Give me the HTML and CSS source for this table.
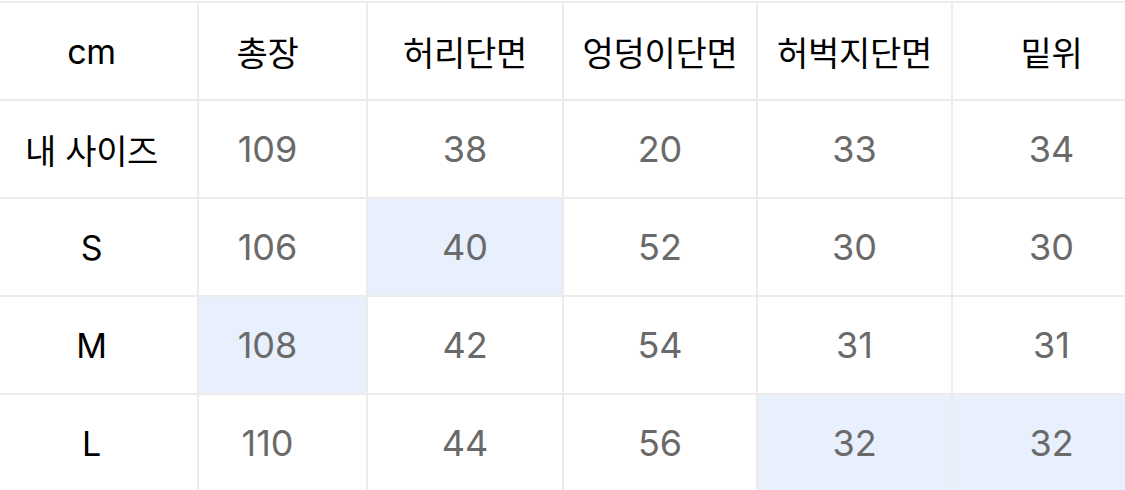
FILE: index.html
```html
<!DOCTYPE html>
<html lang="ko">
<head>
<meta charset="utf-8">
<title>사이즈 표</title>
<link rel="stylesheet" href="styles.css">
</head>
<body>
<table class="size-table">
  <colgroup>
    <col class="c1"><col class="c2"><col class="c3"><col class="c4"><col class="c5"><col class="c6">
  </colgroup>
  <thead>
    <tr class="row-head">
      <th>cm</th><th>총장</th><th>허리단면</th><th>엉덩이단면</th><th>허벅지단면</th><th>밑위</th>
    </tr>
  </thead>
  <tbody>
    <tr class="row-a">
      <th>내 사이즈</th><td>109</td><td>38</td><td>20</td><td>33</td><td>34</td>
    </tr>
    <tr class="row-b">
      <th>S</th><td>106</td><td class="hl">40</td><td>52</td><td>30</td><td>30</td>
    </tr>
    <tr class="row-c">
      <th>M</th><td class="hl">108</td><td>42</td><td>54</td><td>31</td><td>31</td>
    </tr>
    <tr class="row-d">
      <th>L</th><td>110</td><td>44</td><td>56</td><td class="hl">32</td><td class="hl">32</td>
    </tr>
  </tbody>
</table>
</body>
</html>
```

FILE: styles.css
```css
html, body {
  margin: 0;
  padding: 0;
  background: #ffffff;
}
body {
  padding-top: 1px;
  overflow: hidden;
}
.size-table {
  width: 1125px;
  border-collapse: collapse;
  table-layout: fixed;
  font-family: Inter, "Noto Sans CJK KR", sans-serif;
}
.c1 { width: 198px; }
.c2 { width: 169px; }
.c3 { width: 196px; }
.c4 { width: 194px; }
.c5 { width: 195px; }
.c6 { width: 173px; }

.size-table th,
.size-table td {
  border: 2px solid #ececec;
  text-align: center;
  vertical-align: middle;
  padding: 0;
  height: 96px;
}
.size-table tr > :first-child { border-left: none; padding-right: 14px; }
.size-table tr > :nth-child(2) { padding-right: 30px; }
.size-table tr > :last-child { border-right: none; padding-left: 25px; }

.size-table th {
  font-family: Inter, "Noto Sans CJK KR", sans-serif;
  font-weight: 400;
  font-size: 34px;
  color: #000000;
  letter-spacing: -0.3px;
}
.size-table td {
  font-size: 36px;
  font-weight: 400;
  color: #6a6a6a;
}
.size-table .hl {
  background: #e8effd;
}
```
